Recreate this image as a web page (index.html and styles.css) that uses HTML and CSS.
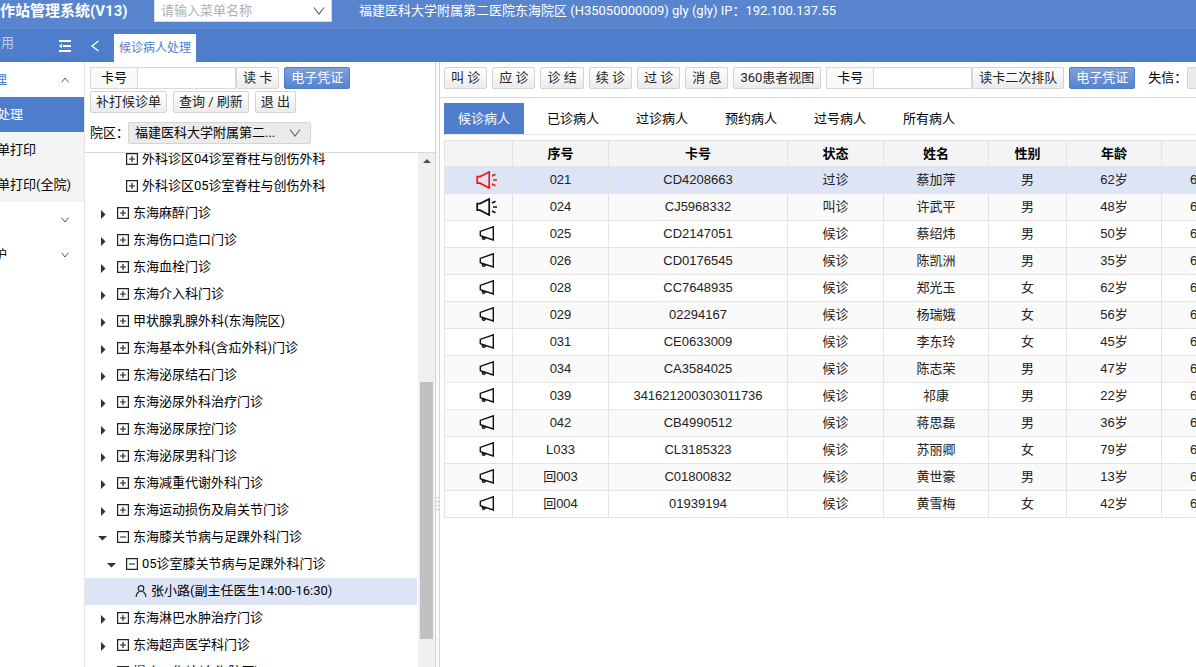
FILE: index.html
```
<!DOCTYPE html>
<html lang="zh-CN">
<head>
<meta charset="utf-8">
<title>候诊病人处理</title>
<link rel="stylesheet" href="styles.css">
</head>
<body>
<svg class="sprite" aria-hidden="true">
  <symbol id="horn" viewBox="0 0 16 16"><path d="M1.300 5.300 14.300.8v13.200L1.300 9.700zM3.500 10.500v2.400l1.500.6 2-2" fill="none" stroke="currentColor" stroke-width="1.400"/></symbol>
  <symbol id="call" viewBox="0 0 22 18"><path d="M1.200 5.600H4L13.200 1v16L4 12.200H1.200zM16 5l3.500-1.800M17 9h4M16 13l3.500 1.800" fill="none" stroke="currentColor" stroke-width="1.700"/></symbol>
  <symbol id="down" viewBox="0 0 12 12"><path d="M1 2.500 6 9l5-6.500" fill="none" stroke="currentColor" stroke-width="1.200"/></symbol>
</svg>
<header class="topbar">
  <h1 class="title">工作站管理系统(V13)</h1>
  <div class="menu-search"><input type="text" placeholder="请输入菜单名称" aria-label="菜单名称"><svg class="chev"><use href="#down"/></svg></div>
  <div class="user">福建医科大学附属第二医院东海院区 (H35050000009) gly (gly) IP：192.100.137.55</div>
</header>
<nav class="navbar">
  <div class="nav-side"><span class="nav-common">常用</span>
    <button class="icon-btn" aria-label="折叠菜单"><svg class="fold" viewBox="0 0 14 14"><path d="M1 2h12M5 7h8M1 12h12" stroke="currentColor" stroke-width="1.800"/><path d="M1 7l3-2.200v4.400z" fill="currentColor"/></svg></button></div>
  <button class="icon-btn back" aria-label="向左"><svg class="arrow" viewBox="0 0 10 12"><path d="M8.500 1 2 6l6.500 5" fill="none" stroke="currentColor" stroke-width="1.300"/></svg></button>
  <a class="page-tab" href="#">候诊病人处理</a>
</nav>
<div class="body">
  <aside class="sidebar">
    <a class="group open" href="#"><span>理</span><svg class="mini flip"><use href="#down"/></svg></a>
    <a class="sub active" href="#">处理</a>
    <a class="sub" href="#">单打印</a>
    <a class="sub" href="#">单打印(全院)</a>
    <a class="group" href="#"><span></span><svg class="mini"><use href="#down"/></svg></a>
    <a class="group" href="#"><span>护</span><svg class="mini"><use href="#down"/></svg></a>
  </aside>
  <section class="left">
    <div class="tools">
      <div class="row"><label class="tag" for="c1">卡号</label><input class="card" id="c1" type="text"><button class="btn">读 卡</button><button class="btn primary">电子凭证</button></div>
      <div class="row gap"><button class="btn">补打候诊单</button><button class="btn">查询 / 刷新</button><button class="btn">退 出</button></div>
      <div class="row campus"><label for="area">院区：</label><div class="pick"><select id="area"><option>福建医科大学附属第二...</option></select><svg class="chev"><use href="#down"/></svg></div></div>
    </div>
    <div class="tree-wrap">
      <ul class="tree" id="tree"></ul>
      <div class="scroll"><i class="up"></i><i class="thumb"></i></div>
    </div>
  </section>
  <div class="splitter"><i></i></div>
  <main class="right">
    <div class="bar"><button class="btn">叫 诊</button><button class="btn">应 诊</button><button class="btn">诊 结</button><button class="btn">续 诊</button><button class="btn">过 诊</button><button class="btn">消 息</button><button class="btn">360患者视图</button>
      <div class="row"><label class="tag" for="c2">卡号</label><input class="card" id="c2" type="text"><button class="btn">读卡二次排队</button><button class="btn primary">电子凭证</button></div>
      <div class="row credit"><label for="cr">失信：</label><div class="pick"><select id="cr"></select></div></div></div>
    <div class="tabs"><a class="on" href="#">候诊病人</a><a href="#">已诊病人</a><a href="#">过诊病人</a><a href="#">预约病人</a><a href="#">过号病人</a><a href="#">所有病人</a></div>
    <div class="grid"><table>
      <colgroup><col class="w-icon"><col class="w-no"><col class="w-card"><col class="w-state"><col class="w-name"><col class="w-sex"><col class="w-age"><col></colgroup>
      <thead><tr><th></th><th>序号</th><th>卡号</th><th>状态</th><th>姓名</th><th>性别</th><th>年龄</th><th></th></tr></thead>
      <tbody id="rows"></tbody>
    </table></div>
  </main>
</div>
<script src="app.js"></script>
</body>
</html>
```
FILE: styles.css
```
* { box-sizing: border-box; }
body { margin: 0; height: 100vh; display: flex; flex-direction: column; overflow: hidden; font: 13px/20px Roboto, "Noto Sans CJK SC", sans-serif; color: #000; background: #fff; }
button, input, select { font: inherit; color: inherit; }
a { color: inherit; text-decoration: none; }
.sprite { position: absolute; width: 0; height: 0; }
.topbar { height: 29px; flex: none; display: flex; align-items: flex-start; background: #5885ce; border-bottom: 1px solid #5e8ad0; color: #fff; white-space: nowrap; }
.title { width: 154px; margin: 0; font-size: 15px; line-height: 22px; text-indent: -15px; }
.menu-search { display: flex; align-items: center; width: 178px; height: 22px; padding: 0 6px; background: #fff; border: 1px solid #d9d9d9; border-top: 0; }
.menu-search input { flex: 1; min-width: 0; border: 0; padding: 0; outline: 0; color: #333; }
.menu-search input::placeholder { color: #b0b0b0; }
.chev { width: 12px; height: 12px; color: #666; flex: none; }
.user { margin-left: 27px; line-height: 22px; }
.navbar { height: 33px; flex: none; display: flex; background: #4e7ecb; color: #fff; }
.nav-side { width: 84px; display: flex; align-items: center; justify-content: space-between; padding-right: 10px; }
.nav-common { color: #c0d0ee; margin-left: -12px; line-height: 28px; align-self: flex-start; }
.icon-btn { background: none; border: 0; padding: 2px; display: flex; color: #fff; align-items: center; }
.fold { width: 14px; height: 14px; }
.back { width: 30px; padding-left: 6px; }
.arrow { width: 10px; height: 12px; }
.page-tab { align-self: flex-end; height: 28px; padding: 0 5px; font-size: 12px; line-height: 28px; background: #fff; color: #4e7ecb; }
.body { flex: 1; min-height: 0; display: flex; }
.sidebar { width: 85px; flex: none; border-right: 1px solid #e6e6e6; overflow: hidden; white-space: nowrap; }
.group { height: 35px; display: flex; align-items: center; justify-content: space-between; padding-right: 15px; }
.group span { margin-left: -6px; }
.open span { color: #4e7ecb; }
.mini { width: 8px; height: 8px; color: #333; }
.flip { transform: rotate(180deg); }
.sub { display: block; height: 35px; line-height: 36px; text-indent: -3px; background: #f4f4f4; }
.sub.active { background: #4e7ecb; color: #fff; }
.left { width: 351px; flex: none; display: flex; flex-direction: column; border-right: 1px solid #d4d4d4; }
.tools { padding: 5px 5px 8px; display: flex; flex-direction: column; gap: 2px; }
.row { display: flex; align-items: center; white-space: nowrap; }
.gap { gap: 6px; }
.tag { height: 22px; width: 48px; text-align: center; border: 1px solid #d9d9d9; background: #fafafa; line-height: 19px; }
.card { width: 98px; height: 22px; border: 1px solid #d9d9d9; border-left: 0; padding: 0 4px; }
.btn { height: 22px; padding: 0 6px; line-height: 18px; border: 1px solid #d4d4d4; border-radius: 2px; background: linear-gradient(#fff, #ebebeb); color: #222; white-space: nowrap; }
.gap .btn { padding: 0 5px; }
.primary { margin-left: 5px; color: #fff; border-color: #4e7ecb; background: linear-gradient(#7ea0db, #5583d0); }
.campus { padding-top: 7px; gap: 6px; }
.campus label { width: 32px; }
.pick { display: flex; align-items: center; width: 183px; height: 22px; border: 1px solid #d4d4d4; background: #ebebeb; border-radius: 2px; padding: 0 9px 0 6px; }
.pick select { appearance: none; border: 0; background: none; flex: 1; min-width: 0; padding: 0; }
.tree-wrap { flex: 1; min-height: 0; display: flex; border-top: 1px solid #d9d9d9; overflow: hidden; }
.tree { flex: 1; margin: -7px 0 0; padding: 0; list-style: none; overflow: hidden; }
.tree li { height: 27px; display: flex; align-items: center; padding-left: 13px; gap: 4px; line-height: 26px; white-space: nowrap; }
.tree li span { height: 27px; }
.tree .l1 { padding-left: 22px; }
.tree .l2 { padding-left: 50px; }
.tree .sel { background: #dce4f6; }
.tri { width: 9px; height: 9px; margin: 2px 6px 0 0; color: #333; }
.box { width: 12px; height: 12px; margin-bottom: 2px; color: #222; flex: none; }
.scroll { width: 17px; margin-left: 1px; background: #f0f0f0; display: flex; flex-direction: column; align-items: center; }
.up { margin-top: 6px; border: 4px solid transparent; border-top: 0; border-bottom: 4px solid #505050; }
.thumb { width: 13px; height: 257px; margin-top: 219px; background: #c1c1c1; }
.splitter { width: 4px; flex: none; display: flex; align-items: center; background: #fafafa; border-right: 1px solid #d4d4d4; }
.splitter i { width: 3px; height: 15px; margin-top: 280px; background: repeating-linear-gradient(#ccc 0 1px, transparent 1px 4px); }
.right { flex: 1; min-width: 0; display: flex; flex-direction: column; overflow: hidden; }
.bar { display: flex; gap: 5px; padding: 5px 4px 8px; border-bottom: 1px solid #d9d9d9; }
.bar .btn, .bar .row, .bar .pick { flex: none; }
.credit { padding-left: 8px; }
.tabs { display: flex; gap: 9px; margin: 5px 0 0 4px; border-bottom: 1px solid #e6e6e6; white-space: nowrap; }
.tabs a { padding: 0 14px; line-height: 31px; }
.tabs .on { background: #4e7ecb; color: #fff; }
.grid { margin: 5px 0 0 4px; overflow: hidden; font-family: "Liberation Sans", "Noto Sans CJK SC", sans-serif; }
table { width: calc(100% + 60px); table-layout: fixed; border-collapse: collapse; }
.w-icon { width: 68px; } .w-no { width: 96px; } .w-card { width: 179px; } .w-state { width: 96px; } .w-name { width: 105px; } .w-sex { width: 78px; } .w-age { width: 95px; }
th, td { height: 27px; padding: 0; border: 1px solid #e3e3e3; text-align: center; color: #222; overflow: hidden; }
th { background: #f4f4f4; color: #000; height: 26px; }
td:first-child { padding-left: 16px; }
td:last-child { text-align: left; padding-left: 28px; }
tbody tr:nth-child(even) { background: #fafafa; }
tbody tr:first-child { background: #dce4f6; }
td svg { display: block; margin: 0 auto; width: 16px; height: 16px; color: #111; }
td .calling { width: 22px; height: 18px; }
tr:first-child .calling { color: #f11; }
```
FILE: app.js
```
const nodes = [
  ["l1", "+", "外科诊区04诊室脊柱与创伤外科"], ["l1", "+", "外科诊区05诊室脊柱与创伤外科"],
  ["", ">", "东海麻醉门诊"], ["", ">", "东海伤口造口门诊"], ["", ">", "东海血栓门诊"], ["", ">", "东海介入科门诊"],
  ["", ">", "甲状腺乳腺外科(东海院区)"], ["", ">", "东海基本外科(含疝外科)门诊"], ["", ">", "东海泌尿结石门诊"],
  ["", ">", "东海泌尿外科治疗门诊"], ["", ">", "东海泌尿尿控门诊"], ["", ">", "东海泌尿男科门诊"], ["", ">", "东海减重代谢外科门诊"],
  ["", ">", "东海运动损伤及肩关节门诊"], ["", "v", "东海膝关节病与足踝外科门诊"], ["l1", "v", "05诊室膝关节病与足踝外科门诊"],
  ["l2 sel", "u", "张小路(副主任医生14:00-16:30)"], ["", ">", "东海淋巴水肿治疗门诊"], ["", ">", "东海超声医学科门诊"], ["", ">", "慢病工作站(东海院区)"]
];
const tri = t => `<svg class="tri" viewBox="0 0 9 9"><path d="${t === "v" ? "M0 2h9L4.500 6.500z" : t === ">" ? "M3 0v9L7.500 4.500z" : ""}" fill="currentColor"/></svg>`;
const box = t => t === "u"
  ? '<svg class="box" viewBox="0 0 12 12"><circle cx="6" cy="3.500" r="2.800" fill="none" stroke="currentColor" stroke-width="1.200"/><path d="M1.200 12c0-3 1.800-4.800 3.300-5.500M10.800 12c0-3-1.800-4.800-3.300-5.500" fill="none" stroke="currentColor" stroke-width="1.200"/></svg>'
  : `<svg class="box" viewBox="0 0 12 12"><path d="M.6.6h10.800v10.800H.6zM3 6h6${t === "v" ? "" : "M6 3v6"}" fill="none" stroke="currentColor" stroke-width="1.200"/></svg>`;
document.getElementById("tree").innerHTML = nodes.map(([c, t, s], i) => `<li class="${c}">${t === "u" ? "" : tri(c === "l1" && t === "+" ? "" : t)}${box(t)}<span>${s}</span></li>`).join("");

const data = [
  ["021", "CD4208663", "过诊", "蔡加萍", "男", 62], ["024", "CJ5968332", "叫诊", "许武平", "男", 48],
  ["025", "CD2147051", "候诊", "蔡绍炜", "男", 50], ["026", "CD0176545", "候诊", "陈凯洲", "男", 35],
  ["028", "CC7648935", "候诊", "郑光玉", "女", 62], ["029", "02294167", "候诊", "杨瑞娥", "女", 56],
  ["031", "CE0633009", "候诊", "李东玲", "女", 45], ["034", "CA3584025", "候诊", "陈志荣", "男", 47],
  ["039", "341621200303011736", "候诊", "祁康", "男", 22], ["042", "CB4990512", "候诊", "蒋思磊", "男", 36],
  ["L033", "CL3185323", "候诊", "苏丽卿", "女", 79], ["回003", "C01800832", "候诊", "黄世豪", "男", 13],
  ["回004", "01939194", "候诊", "黄雪梅", "女", 42]
];
document.getElementById("rows").innerHTML = data.map((r, i) => {
  const icon = i < 2 ? '<svg class="calling"><use href="#call"/></svg>' : '<svg><use href="#horn"/></svg>';
  return `<tr><td>${icon}</td>${r.slice(0, 5).map(v => `<td>${v}</td>`).join("")}<td>${r[5]}岁</td><td>6</td></tr>`;
}).join("");
```
